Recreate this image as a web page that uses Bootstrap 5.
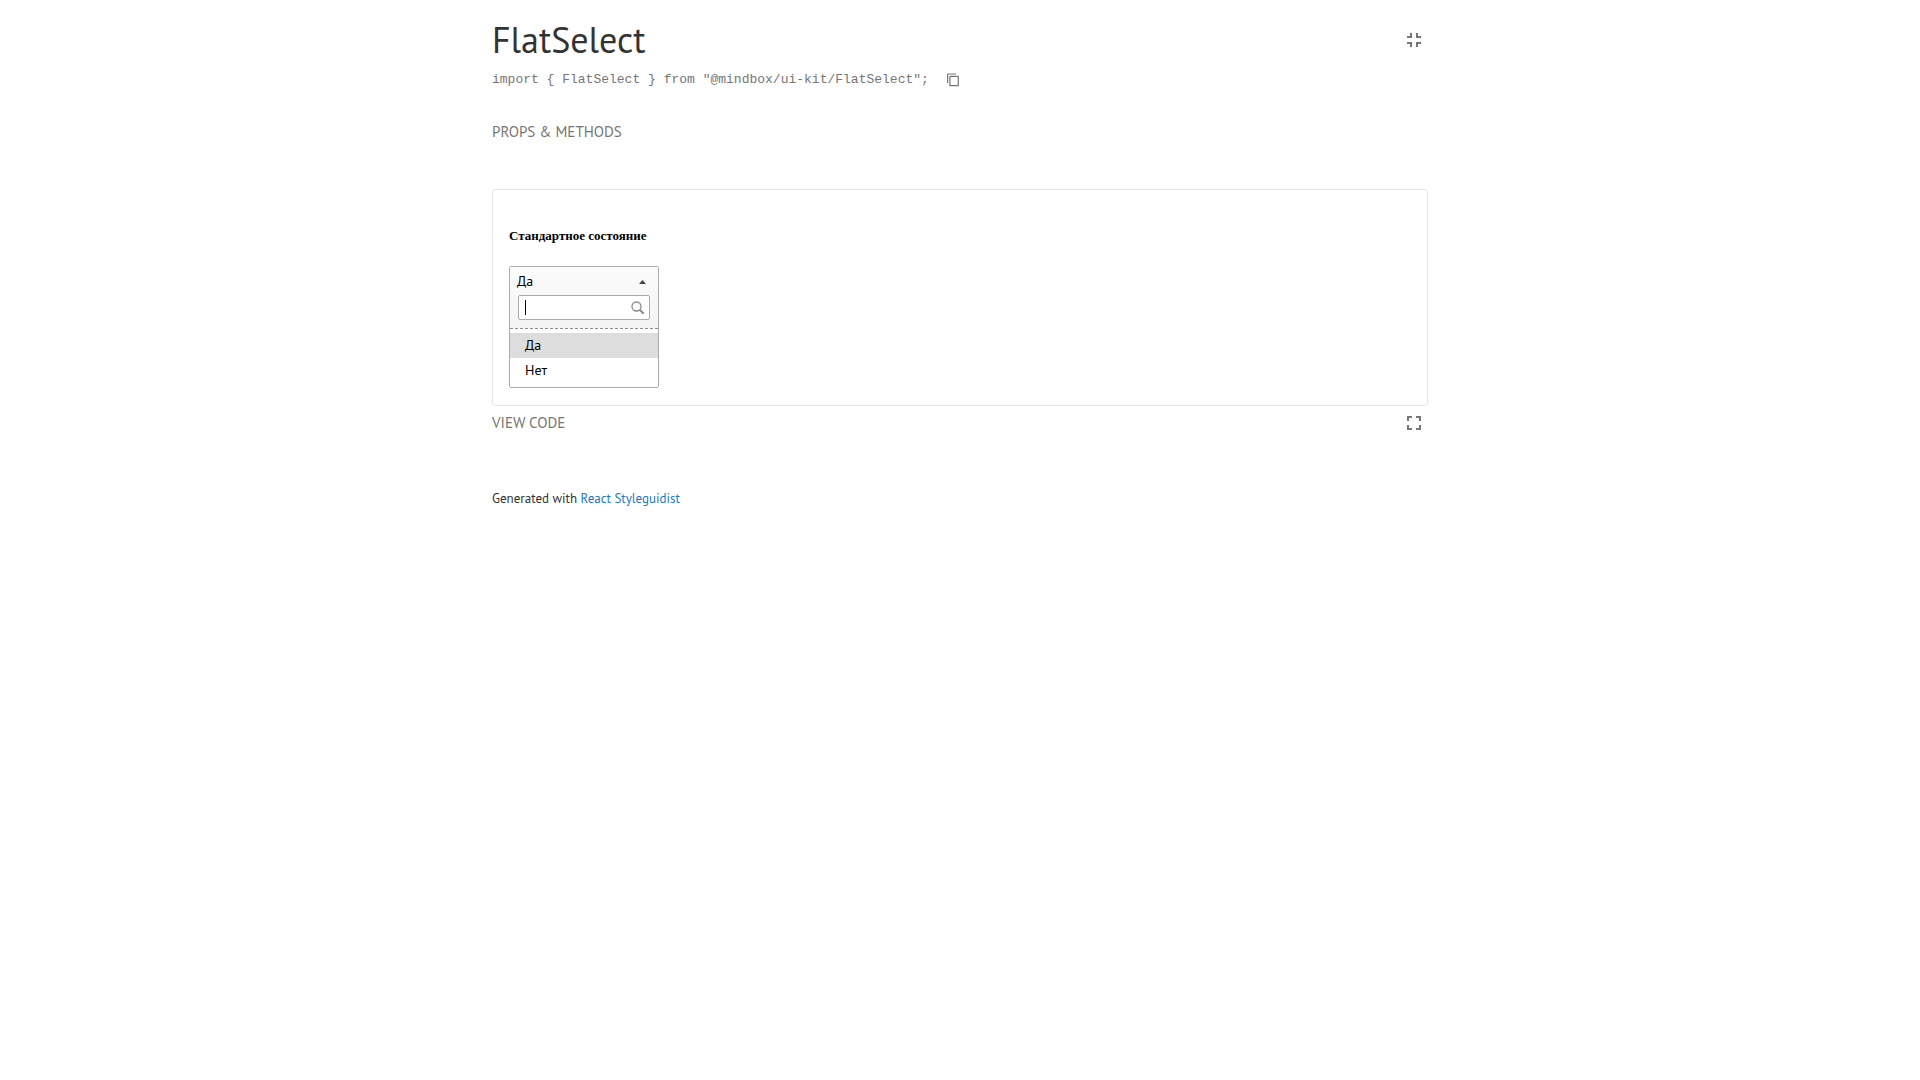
<!DOCTYPE html>
<html lang="en">
<head>
<meta charset="utf-8">
<meta name="viewport" content="width=device-width, initial-scale=1">
<title>FlatSelect</title>
<link href="https://cdn.jsdelivr.net/npm/bootstrap@5.3.0/dist/css/bootstrap.min.css" rel="stylesheet">
<style>
body { font-family: "PT Sans", Lato, "Noto Sans", sans-serif; color: #333; }
.guide { max-width: 1000px; padding: 16px 32px; }
.guide-title { font-size: 36px; line-height: 48px; font-weight: 400; }
.import-row { gap: 18px; }
.import-path { font-family: "Liberation Mono", monospace; font-size: 13px; line-height: 24px; color: #767676; }
.tool { border: 0; background: none; padding: 0; color: #767676; display: inline-flex; }
.tool svg { fill: currentColor; display: block; }
.tab-row { padding: 30px 0 47px; }
.tab-btn { border: 0; background: none; padding: 0; color: #767676; font-size: 15px; line-height: 20px; text-transform: uppercase; }
.preview { border: 1px solid #e8e8e8; border-radius: 3px; padding: 16px 16px 17px; color: #000; }
.state-title { font: 700 13px/16px "Liberation Serif", serif; margin: 22px 0; }
.flat-select { width: 150px; border: 1px solid #aaabae; border-radius: 2px; font-size: 14px; }
.select-head { background: linear-gradient(#fcfcfc, #f3f3f3); border-bottom: 1px dashed #8c8c8c; padding: 0 8px 8px; }
.current-value { border: 0; background: none; color: #000; padding: 0 3px 0 0; margin-left: -1px; height: 28px; width: 100%; }
.current-value svg { margin-top: 2px; }
.search-box { width: 100%; height: 25px; border: 1px solid #aaabae; border-radius: 2px; padding: 0 24px 0 7px; background: #fff; outline: 0; }
.search-icon { right: 5px; top: 6px; }
.caret-line { left: 7px; top: 5px; width: 1px; height: 15px; background: #000; }
.option-list { padding: 4px 0; background: #fff; }
.option-row { line-height: 25px; padding: 0 15px; }
.option-row.current { background: #ddd; }
.code-row { padding-top: 5px; }
.guide-footer { font-size: 13px; line-height: 20px; padding-top: 54px; }
.guide-footer a { color: #1978c8; }
</style>
</head>
<body>
<main class="guide container-fluid mx-auto">
  <header>
    <div class="d-flex align-items-center justify-content-between pe-1">
      <h1 class="guide-title m-0">FlatSelect</h1>
      <button class="tool" type="button" aria-label="Show all components"><svg width="20" height="24" viewBox="0 0 20 24"><path d="M3 14h5v5H6v-3H3zM6 5h2v5H3V8h3zM12 14h5v2h-3v3h-2zM14 5v3h3v2h-5V5z"/></svg></button>
    </div>
    <div class="import-row d-flex align-items-center mt-1">
      <span class="import-path">import { FlatSelect } from "@mindbox/ui-kit/FlatSelect";</span>
      <button class="tool" type="button" aria-label="Copy to clipboard"><svg width="12" height="14" viewBox="0 0 12 14"><path d="M0 1.5Q0 .4 1 .4h8v1.2H1.2V10H0zM3.2 2.8H11q.9 0 .9.9v8.7q0 .9-.9.9H3.2q-.9 0-.9-.9V3.7q0-.9.9-.9zm.3 1.2v8.1h7.2V4z" fill-rule="evenodd"/></svg></button>
    </div>
  </header>
  <div class="tab-row d-flex"><button class="tab-btn" type="button">Props &amp; methods</button></div>
  <section class="preview">
    <h2 class="state-title">Стандартное состояние</h2>
    <div class="flat-select">
      <div class="select-head">
        <button class="current-value d-flex align-items-center justify-content-between" type="button" aria-expanded="true"><span>Да</span><svg width="7" height="4" viewBox="0 0 7 4"><path d="M3.5 0 7 4H0z" fill="#444"/></svg></button>
        <div class="position-relative">
          <input class="search-box d-block" type="text" aria-label="Поиск">
          <span class="caret-line position-absolute"></span>
          <svg class="search-icon position-absolute" width="14" height="14" viewBox="0 0 14 14" fill="none" stroke="#8c8c8c"><circle cx="5.5" cy="5.5" r="4.5" stroke-width="1.3"/><path d="m8.7 8.7 4 4" stroke-width="2.2"/></svg>
        </div>
      </div>
      <ul class="option-list list-unstyled m-0">
        <li class="option-row current">Да</li>
        <li class="option-row">Нет</li>
      </ul>
    </div>
  </section>
  <div class="code-row d-flex align-items-center justify-content-between pe-1">
    <button class="tab-btn" type="button">View code</button>
    <button class="tool" type="button" aria-label="Open isolated"><svg width="20" height="24" viewBox="0 0 20 24"><path d="M5 14H3v5h5v-2H5zM3 10h2V7h3V5H3zM15 17h-3v2h5v-5h-2zM12 5v2h3v3h2V5z"/></svg></button>
  </div>
  <footer class="guide-footer">Generated with <a class="text-decoration-none" href="#">React Styleguidist</a></footer>
</main>
<script src="https://cdn.jsdelivr.net/npm/bootstrap@5.3.0/dist/js/bootstrap.bundle.min.js"></script>
</body>
</html>
